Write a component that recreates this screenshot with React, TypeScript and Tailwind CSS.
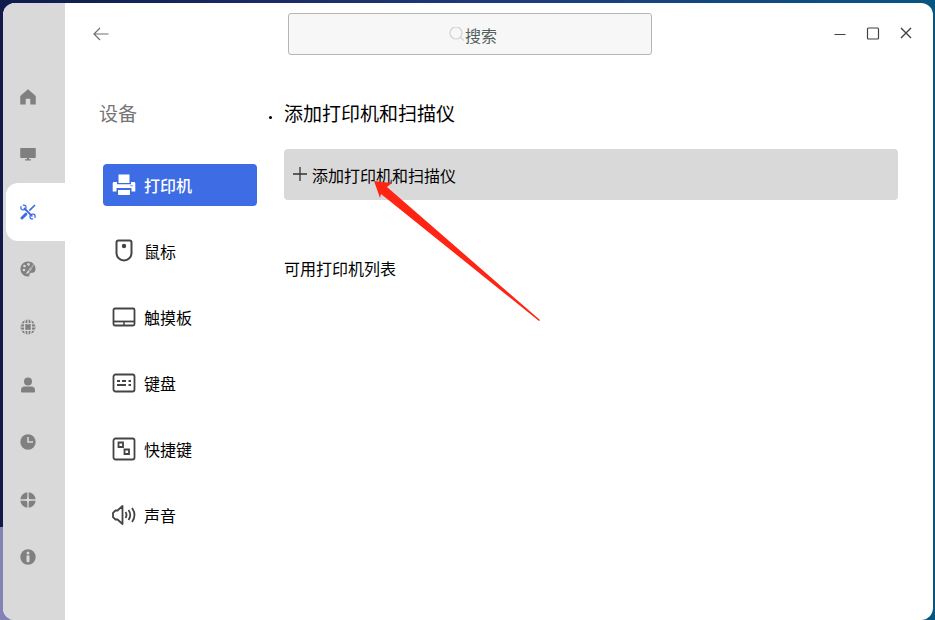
import type { ReactNode } from "react";

function Glyph({ children, size = 16 }: { children: ReactNode; size?: number }) {
  return (
    <svg width={size} height={size} viewBox={`0 0 ${size} ${size}`} fill="none" aria-hidden="true" className="shrink-0">
      {children}
    </svg>
  );
}

const sections: { label: string; active?: boolean; icon: ReactNode }[] = [
  {
    label: "主页",
    icon: <path d="M8 .5 15.500 7v8.200h-5V10.500q0-1-1-1h-3q-1 0-1 1v4.700h-5V7z" fill="currentColor" stroke="currentColor" strokeWidth=".5" strokeLinejoin="round" />,
  },
  {
    label: "显示",
    icon: <path d="M1 2h14q.8 0 .8.800v8.500q0 .8-.8.800H9v1.200h2v1.200H5v-1.200h2v-1.200H1q-.8 0-.8-.8V2.800Q.2 2 1 2z" fill="currentColor" />,
  },
  {
    label: "设备",
    active: true,
    icon: (
      <g stroke="currentColor" strokeLinecap="round">
        <path d="M14.500 1.500 9.800 6.200" strokeWidth="1.700" />
        <path d="M5.800 10.200 2 14" strokeWidth="3" />
        <path d="m4.500 4.500 7.300 7.300" strokeWidth="1.800" />
        <path d="M1 2.600q-.6 3 1.800 3.200 2 .2 2.800-.8.800-1.800 0-3.200Q4.500.7 3.300 1.200M15 13.400q.6-3-1.800-3.200-2-.2-2.800.8-.8 1.800 0 3.200 1.100 1.100 2.300.6" strokeWidth="1.300" />
      </g>
    ),
  },
  {
    label: "个性化",
    icon: (
      <>
        <path d="M8 .5C3.600.5.5 3.700.5 8s3.300 7.500 7.200 7.500c2.200 0 1.500-2 2-3 .8-1.400 3-.2 4.500-1.300.9-.7 1.300-2 1.300-3.200C15.500 3.700 12.400.5 8 .5z" fill="currentColor" />
        <g fill="#d9d9d9">
          <circle cx="4" cy="9" r="1.300" />
          <circle cx="4.500" cy="5" r="1.300" />
          <circle cx="8.500" cy="3.400" r="1.300" />
          <path d="m14.500 2.500-4 7.500-2-1.500zM8 9l1.800 1.500Q9 13 5.500 12.800 7 12 8 9z" />
        </g>
        <path d="m12.500 5-3 4.300" stroke="currentColor" strokeWidth=".8" />
      </>
    ),
  },
  {
    label: "网络",
    icon: (
      <>
        <circle cx="8" cy="8" r="7.500" fill="currentColor" />
        <g stroke="#d9d9d9" strokeWidth="1.200">
          <path d="M8 0v5.500M8 10.500V16M0 8h5.500M10.500 8H16" />
          <path d="M5.500 0Q3.500 8 5.500 16M10.500 0q2 8 0 16M0 5.200q8-1.400 16 0M0 10.800q8 1.400 16 0" />
        </g>
      </>
    ),
  },
  {
    label: "账户",
    icon: (
      <g fill="currentColor">
        <circle cx="8" cy="4.500" r="4" />
        <path d="M1 13.500Q1 9.600 4.500 9.600h7q3.500 0 3.500 3.900v1q0 1-1 1H2q-1 0-1-1z" />
      </g>
    ),
  },
  {
    label: "时间",
    icon: (
      <>
        <circle cx="8" cy="8" r="7.700" fill="currentColor" />
        <path d="M8 3v5h5" stroke="#d9d9d9" strokeWidth="1.500" />
      </>
    ),
  },
  {
    label: "更新",
    icon: (
      <>
        <circle cx="8" cy="8" r="7.700" fill="currentColor" />
        <path d="M8 0v16M0 8h16" stroke="#d9d9d9" strokeWidth="1.300" />
        <path d="m8 4.500 1.100 2.400L11.500 8 9.100 9.100 8 11.500 6.900 9.100 4.500 8l2.400-1.100z" fill="#d9d9d9" />
      </>
    ),
  },
  {
    label: "关于",
    icon: (
      <>
        <circle cx="8" cy="8" r="7.700" fill="currentColor" />
        <circle cx="8" cy="4" r="1.500" fill="#d9d9d9" />
        <path d="M6.500 6.600h3v5.500q0 1.200-1.500 1.200t-1.500-1.200z" fill="#d9d9d9" />
      </>
    ),
  },
];

const devices: { label: string; active?: boolean; icon: ReactNode }[] = [
  {
    label: "打印机",
    active: true,
    icon: (
      <g fill="currentColor">
        <path d="M6.500 1.500h11V10h-11z" />
        <path d="M2 9q-1.300 0-1.300 1.300v8.200h3.800V15h15v3.500h3.800v-8.200Q23.300 9 22 9h-3v2.200H5V9z" />
        <path d="M6 17h12v4q0 1-1 1H7q-1 0-1-1z" />
        <path d="M18.500 12.300h2v1h-2z" fill="#3d6ce5" />
      </g>
    ),
  },
  {
    label: "鼠标",
    icon: (
      <>
        <path d="M6.500 1.500h11q2 0 2 2V14a7.500 7.500 0 0 1-15 0V3.500q0-2 2-2z" stroke="currentColor" strokeWidth="2" />
        <circle cx="12" cy="7" r="2.200" fill="currentColor" />
      </>
    ),
  },
  {
    label: "触摸板",
    icon: (
      <g stroke="currentColor" strokeWidth="1.800">
        <rect x="1.500" y="3.500" width="21" height="17" rx="1.500" />
        <path d="M1.500 16.500h21" />
        <path d="M12 16.500v4" strokeWidth="1.500" />
      </g>
    ),
  },
  {
    label: "键盘",
    icon: (
      <>
        <rect x="1.500" y="3.500" width="21" height="17" rx="2" stroke="currentColor" strokeWidth="1.800" />
        <path d="M5 10h3m2 0h4m2.500 0h2.500M5 14h9m2.500 0h2.500" stroke="currentColor" strokeWidth="1.800" />
      </>
    ),
  },
  {
    label: "快捷键",
    icon: (
      <g stroke="currentColor" strokeWidth="1.800">
        <rect x="1.500" y="1.500" width="21" height="21" rx="2" />
        <path d="M6.500 5.500h4.500V10H6.500zM12.500 12.500H17V17h-4.500z" strokeWidth="1.800" />
      </g>
    ),
  },
  {
    label: "声音",
    icon: (
      <g stroke="currentColor" strokeWidth="1.800" strokeLinejoin="round">
        <path d="M3.500 7.500h2L10.500 3v18l-5-4.500h-2L1 14.200V9.800z" />
        <path d="M13.500 9q2 3 0 6M16.500 7q3.500 5 0 10M20 5q5 7 0 14" />
      </g>
    ),
  },
];

function Sidebar() {
  return (
    <nav aria-label="设置分类" className="flex w-[62px] shrink-0 flex-col bg-[#d9d9d9] pt-[65px] pb-[34px] pl-[3px]">
      {sections.map(({ label, active, icon }) => (
        <button
          key={label}
          type="button"
          aria-label={label}
          className={
            active
              ? "flex flex-1 items-center rounded-l-xl bg-white pl-[14px] text-[#3d6ce5]"
              : "flex flex-1 items-center pl-[14px] text-[#808080]"
          }
        >
          <Glyph>{icon}</Glyph>
        </button>
      ))}
    </nav>
  );
}

function TitleBar() {
  return (
    <header className="flex items-start pt-[10px]">
      <button type="button" aria-label="返回" className="mt-[13px] ml-7 text-[#707070]">
        <Glyph>
          <path d="M15.500 8H1.500M7 2 1 8l6 6" stroke="currentColor" strokeWidth="1.200" />
        </Glyph>
      </button>
      <label className="ml-[179px] flex h-[42px] w-[364px] items-center justify-center rounded-[3px] border border-[#b5b5b5] bg-[#f7f7f7] pt-[2px] pl-[6px]">
        <Glyph>
          <circle cx="7" cy="6" r="6" stroke="#d0d5d4" strokeWidth="1.200" />
          <path d="m11.500 10.500 3.500 3" stroke="#d0d5d4" strokeWidth="1.200" />
        </Glyph>
        <input
          type="text"
          aria-label="搜索"
          placeholder="搜索"
          className="field-sizing-content min-w-8 bg-transparent text-base leading-6 text-[#536060] outline-none placeholder:text-[#536060]"
        />
      </label>
      <div className="mt-3 mr-[19px] ml-auto flex gap-[17px] text-[#404040]">
        <button type="button" aria-label="最小化">
          <Glyph>
            <path d="M2.500 9.500h11" stroke="currentColor" strokeWidth="1" />
          </Glyph>
        </button>
        <button type="button" aria-label="最大化">
          <Glyph>
            <rect x="2.500" y="3" width="11" height="11" rx="1" stroke="currentColor" strokeWidth="1.200" />
          </Glyph>
        </button>
        <button type="button" aria-label="关闭">
          <Glyph>
            <path d="m3 3 10 10M13 3 3 13" stroke="currentColor" strokeWidth="1.400" />
          </Glyph>
        </button>
      </div>
    </header>
  );
}

function DeviceMenu() {
  return (
    <aside className="w-[219px] shrink-0 pr-[27px] pl-[34px]">
      <h2 className="text-[19px] leading-7 text-[#757575]">设备</h2>
      <ul className="mt-[37px] ml-1 flex flex-col gap-6">
        {devices.map(({ label, active, icon }) => (
          <li key={label}>
            <button
              type="button"
              className={
                active
                  ? "flex h-[42px] w-full items-center gap-2 rounded bg-[#3d6ce5] pl-[9px] text-base font-medium text-white"
                  : "flex h-[42px] w-full items-center gap-2 rounded pl-[9px] text-base text-black"
              }
            >
              <span className={active ? "text-white" : "text-[#444444]"}>
                <Glyph size={24}>{icon}</Glyph>
              </span>
              {label}
            </button>
          </li>
        ))}
      </ul>
    </aside>
  );
}

function PrinterPanel() {
  return (
    <section className="relative min-w-0 flex-1 pr-[35px]">
      <span className="absolute top-[17px] -left-[15px] size-[3px] rounded-full bg-black" />
      <h1 className="text-[19px] leading-7 text-black">添加打印机和扫描仪</h1>
      <button
        type="button"
        className="mt-[22px] flex h-[51px] w-full items-center gap-1 rounded bg-[#d9d9d9] pl-2 text-base text-black"
      >
        <Glyph>
          <path d="M8 0v14M1 7h14" stroke="#333333" strokeWidth="1.300" />
        </Glyph>
        添加打印机和扫描仪
      </button>
      <h2 className="mt-14 text-base leading-6 text-black">可用打印机列表</h2>
      <svg
        width="166"
        height="142"
        viewBox="0 0 166 142"
        aria-hidden="true"
        className="pointer-events-none absolute top-[82px] left-[90px]"
      >
        <path d="M0 0 18 2 13 6 166 139 165 140 7 13 6 17z" fill="#ff2515" />
      </svg>
    </section>
  );
}

export default function App() {
  return (
    <div className="flex min-h-screen bg-[linear-gradient(to_bottom,transparent_85%,#8282b4_85%),linear-gradient(to_right,#101b4c,#203878_50%,#075681)] bg-[size:50%_100%,100%_100%] bg-no-repeat pt-[3px] pr-[2px] pl-[3px] font-['Noto_Sans_CJK_SC',sans-serif]">
      <div className="flex flex-1 overflow-hidden rounded-xl bg-white">
        <Sidebar />
        <main className="min-w-0 flex-1">
          <TitleBar />
          <div className="mt-11 flex">
            <DeviceMenu />
            <PrinterPanel />
          </div>
        </main>
      </div>
    </div>
  );
}
